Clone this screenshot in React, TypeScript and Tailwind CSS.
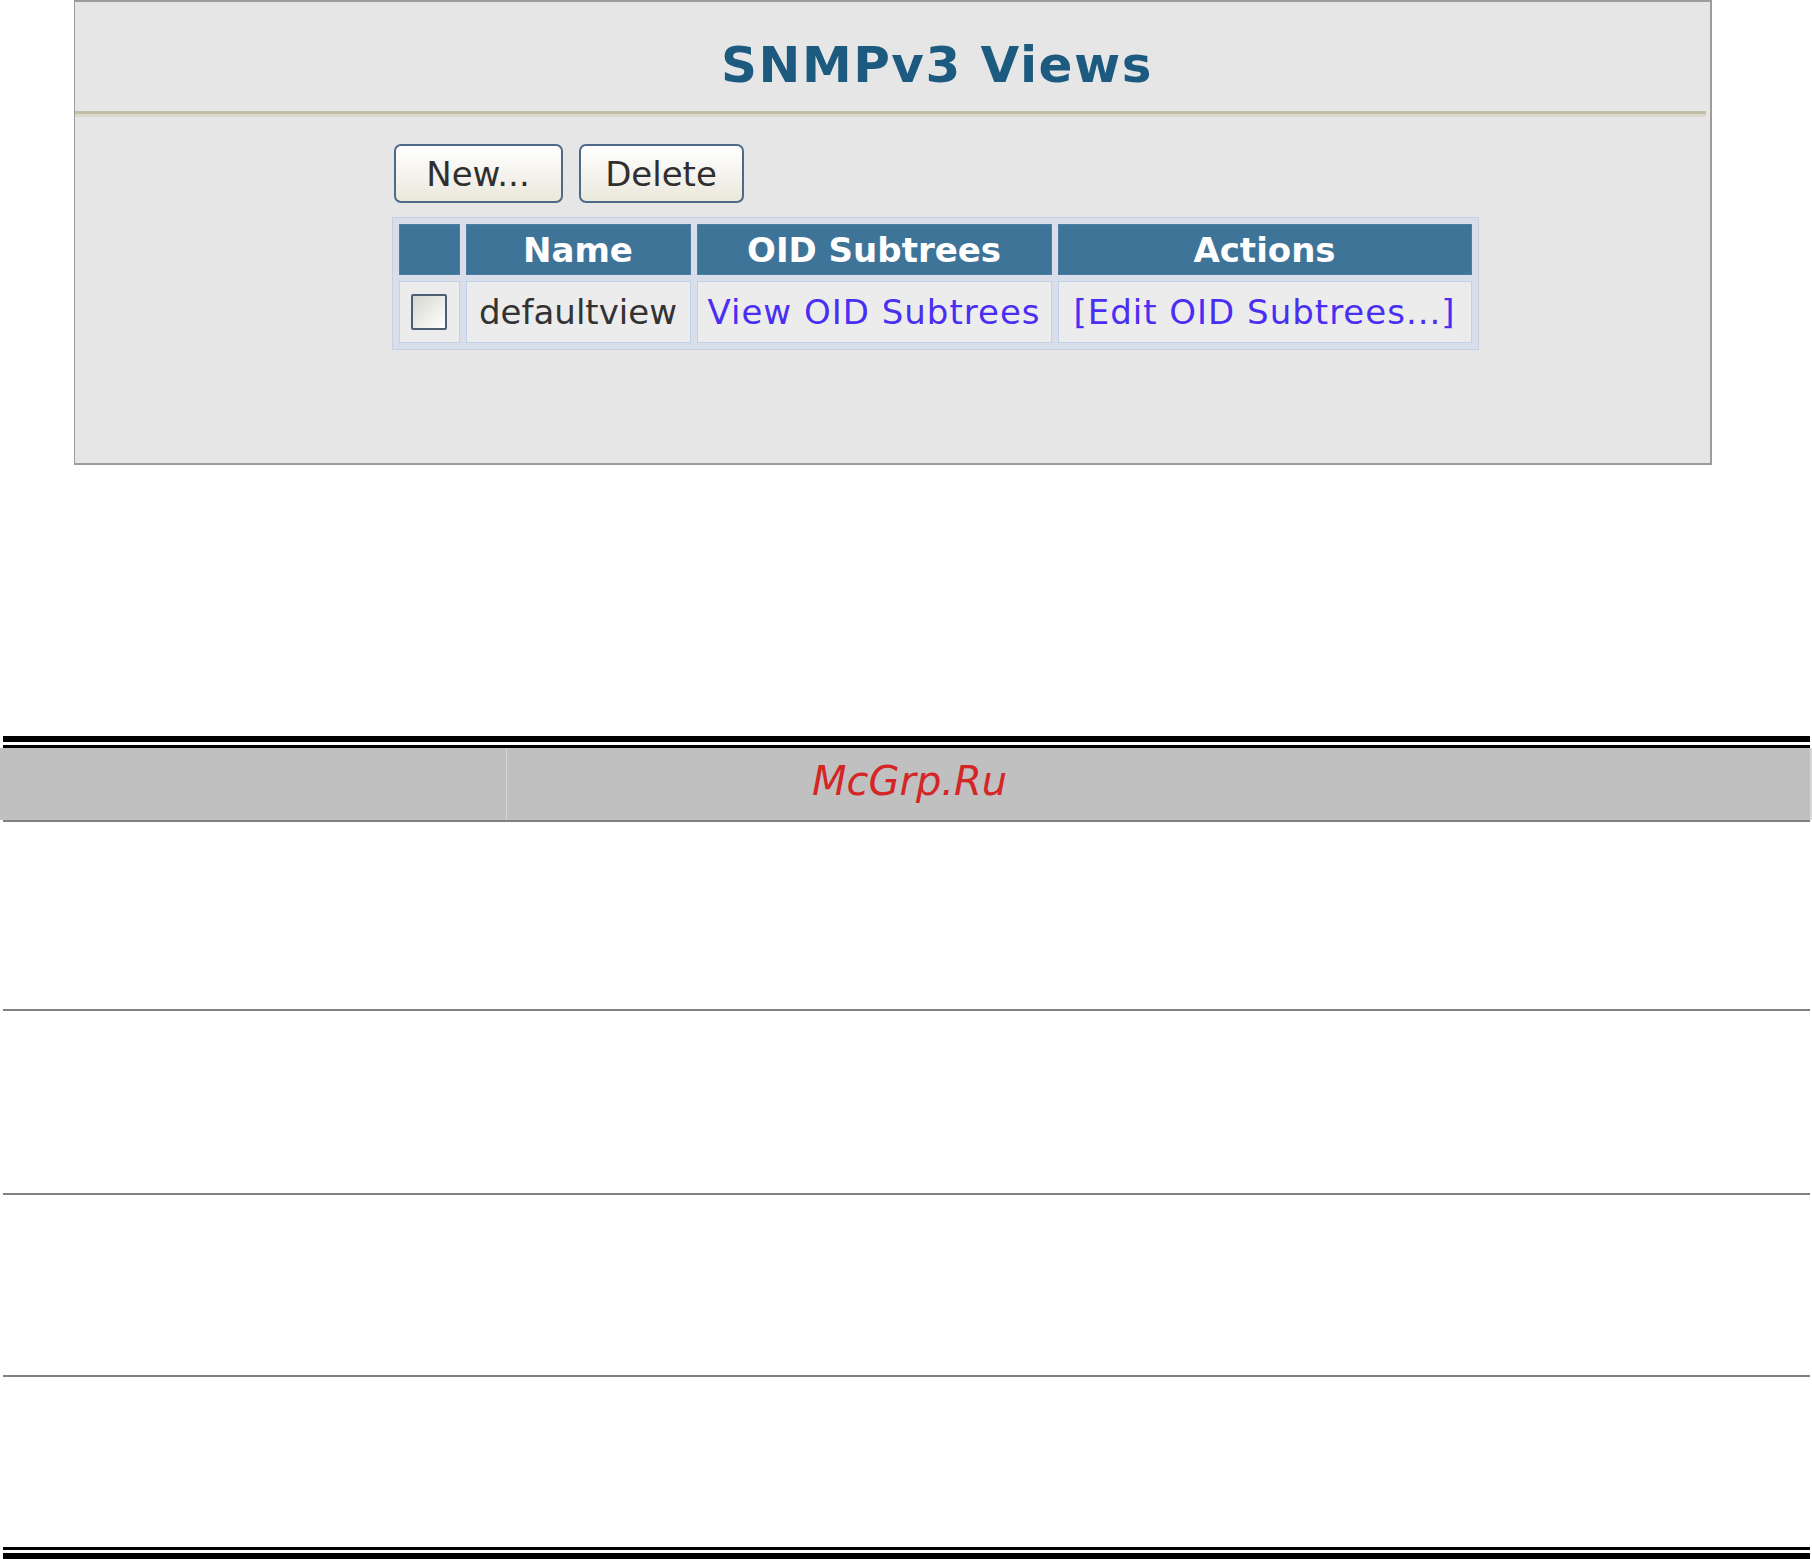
export default function App() {
  return (
    <div className="w-[1812px] h-[1559px] bg-white overflow-hidden font-['DejaVu_Sans',Verdana,sans-serif]">
      {/* SNMPv3 Views panel */}
      <div className="ml-[74px] w-[1638px] h-[465px] bg-[#e6e6e6] border-t-2 border-l border-r-2 border-b-2 border-[#9c9c9c] flex flex-col">
        <div className="h-[109px] pt-[17px] pl-[89px] flex items-center justify-center">
          <h1 className="text-[50px] font-bold tracking-[1.5px] text-[#1d5a80] leading-none">SNMPv3 Views</h1>
        </div>
        <div className="mr-[4px]">
          <div className="h-[3px] bg-[#c2bfa9]" />
          <div className="h-[3px] bg-[#dcdacb]" />
        </div>
        <div className="pl-[85px] pt-[27px] flex justify-center">
          <div className="flex flex-col gap-[14px]">
            <div className="flex gap-[16px] pl-[2px]">
              <button className="w-[169px] h-[59px] border-2 border-[#4d6a88] rounded-[7px] bg-gradient-to-b from-white to-[#ebe8dc] text-[34px] text-[#2f2f2f] leading-none">
                New...
              </button>
              <button className="w-[165px] h-[59px] border-2 border-[#4d6a88] rounded-[7px] bg-gradient-to-b from-white to-[#ebe8dc] text-[34px] text-[#2f2f2f] leading-none">
                Delete
              </button>
            </div>
            <table className="border-separate border-spacing-[6px] border border-[#c3d0e6] bg-[#d8dfeb]">
              <thead>
                <tr>
                  <th className="w-[61px] h-[51px] p-0 bg-[#3f7499] border border-[#4a7ea2]" />
                  <th className="w-[225px] h-[51px] p-0 bg-[#3f7499] border border-[#4a7ea2] text-white font-bold text-[34px] leading-none">Name</th>
                  <th className="w-[355px] h-[51px] p-0 bg-[#3f7499] border border-[#4a7ea2] text-white font-bold text-[34px] leading-none">OID Subtrees</th>
                  <th className="w-[414px] h-[51px] p-0 bg-[#3f7499] border border-[#4a7ea2] text-white font-bold text-[34px] leading-none">Actions</th>
                </tr>
              </thead>
              <tbody>
                <tr>
                  <td className="h-[62px] p-0 bg-[#ececec] border border-[#c3d1e8]">
                    <div className="flex justify-center">
                      <div className="w-[36px] h-[36px] border-2 border-[#4b5e73] rounded-[2px] bg-gradient-to-br from-[#d6d6d0] to-white" />
                    </div>
                  </td>
                  <td className="h-[62px] p-0 bg-[#ececec] border border-[#c3d1e8] text-center text-[34px] text-[#333] whitespace-nowrap leading-none">
                    defaultview
                  </td>
                  <td className="h-[62px] p-0 bg-[#ececec] border border-[#c3d1e8] text-center text-[34px] tracking-[1px] text-[#4a2ef2] whitespace-nowrap leading-none">
                    View OID Subtrees
                  </td>
                  <td className="h-[62px] p-0 bg-[#ececec] border border-[#c3d1e8] text-center text-[34px] tracking-[1px] text-[#4a2ef2] whitespace-nowrap leading-none">
                    [Edit OID Subtrees...]
                  </td>
                </tr>
              </tbody>
            </table>
          </div>
        </div>
      </div>

      {/* Lower document table */}
      <div className="mt-[271px]">
        <div className="ml-[3px] mr-[2px] h-[6px] bg-black" />
        <div className="h-[3px]" />
        <div className="ml-[3px] mr-[2px] h-[3px] bg-black" />
        <div className="flex h-[72px] bg-[#c0c0c0] border-r-2 border-[#d8d8d8]">
          <div className="w-[506px]" />
          <div className="w-px bg-[#d6d6d6]" />
          <div className="flex-1 flex items-center pl-[305px] pb-[6px]">
            <span className="italic text-[40px] text-[#d42626] leading-normal">McGrp.Ru</span>
          </div>
        </div>
        <div className="ml-[3px] mr-[2px] h-[2px] bg-[#808080]" />
        <div className="h-[187px]" />
        <div className="ml-[3px] mr-[2px] h-[2px] bg-[#808080]" />
        <div className="h-[182px]" />
        <div className="ml-[3px] mr-[2px] h-[2px] bg-[#808080]" />
        <div className="h-[180px]" />
        <div className="ml-[3px] mr-[2px] h-[2px] bg-[#808080]" />
        <div className="h-[170px]" />
        <div className="ml-[3px] mr-[2px] h-[3px] bg-black" />
        <div className="h-[3px]" />
        <div className="ml-[3px] mr-[2px] h-[6px] bg-black" />
      </div>
    </div>
  );
}
